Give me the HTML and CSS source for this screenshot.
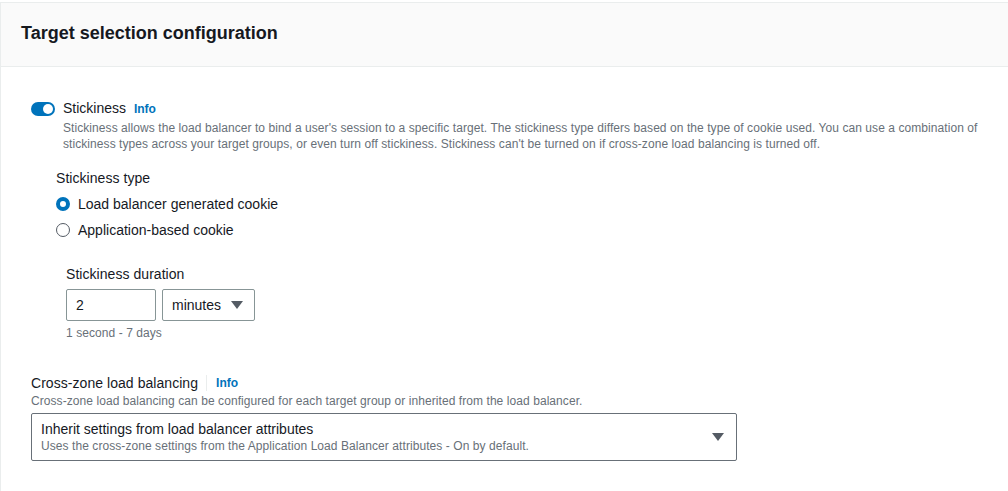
FILE: index.html
```html
<!DOCTYPE html>
<html lang="en">
<head>
    <meta charset="UTF-8">
    <title>Target selection configuration</title>
    <link rel="stylesheet" href="styles.css">
</head>
<body>
    <div class="panel">
        <div class="panel-header">
            <h2>Target selection configuration</h2>
        </div>

        <div class="panel-body">
            <div class="toggle-row">
                <span class="toggle"><span class="knob"></span></span>
                <div class="toggle-text">
                    <div class="label">Stickiness <a class="info">Info</a></div>
                    <p class="desc">Stickiness allows the load balancer to bind a user's session to a specific target. The stickiness type differs based on the type of cookie used. You can use a combination of stickiness types across your target groups, or even turn off stickiness. Stickiness can't be turned on if cross-zone load balancing is turned off.</p>
                </div>
            </div>

            <div class="sticky-type">
                <div class="field-label">Stickiness type</div>
                <label class="radio"><span class="dot checked"></span>Load balancer generated cookie</label>
                <label class="radio"><span class="dot"></span>Application-based cookie</label>

                <div class="duration">
                    <div class="field-label">Stickiness duration</div>
                    <div class="duration-inputs">
                        <div class="input">2</div>
                        <div class="input unit">minutes <span class="caret"></span></div>
                    </div>
                    <div class="hint">1 second - 7 days</div>
                </div>
            </div>

            <div class="cross-zone">
                <div class="field-label">Cross-zone load balancing <span class="sep"></span><a class="info">Info</a></div>
                <div class="hint dark">Cross-zone load balancing can be configured for each target group or inherited from the load balancer.</div>
                <div class="select">
                    <div>
                        <div class="select-title">Inherit settings from load balancer attributes</div>
                        <div class="hint">Uses the cross-zone settings from the Application Load Balancer attributes - On by default.</div>
                    </div>
                    <span class="caret"></span>
                </div>
            </div>
        </div>
    </div>
</body>
</html>
```

FILE: styles.css
```css
:root {
    --text: #16191f;
    --muted: #687078;
    --blue: #0073bb;
    --line: #eaeded;
    --input-border: #879596;
}

* {
    margin: 0;
    padding: 0;
    box-sizing: border-box;
}

body {
    font-family: 'Liberation Sans', Arial, sans-serif;
    color: var(--text);
    background: #fff;
}

.panel {
    margin-top: 2px;
    border-top: 1px solid var(--line);
    border-left: 1px solid var(--line);
}

.panel-header {
    height: 64px;
    background: #fafafa;
    border-bottom: 1px solid var(--line);
    display: flex;
    align-items: center;
    padding: 0 20px;
}

.panel-header h2 {
    font-size: 18px;
    font-weight: 700;
    margin-top: -2px;
}

.panel-body {
    padding: 31px 30px 30px;
}

.info {
    color: var(--blue);
    font-size: 12px;
    font-weight: 700;
    margin-left: 4px;
}

.toggle-row {
    display: flex;
    gap: 8px;
}

.toggle {
    width: 24px;
    height: 14px;
    border-radius: 7px;
    background: var(--blue);
    margin-top: 4px;
    flex-shrink: 0;
    display: flex;
    align-items: center;
    justify-content: flex-end;
    padding-right: 2px;
}

.knob {
    width: 10px;
    height: 10px;
    border-radius: 50%;
    background: #fff;
}

.label {
    font-size: 14px;
    line-height: 20px;
}

.desc {
    font-size: 12px;
    line-height: 16px;
    color: var(--muted);
    margin-top: 1px;
    letter-spacing: 0.07px;
}

.sticky-type {
    padding-left: 25px;
    margin-top: 16px;
}

.field-label {
    font-size: 14px;
    line-height: 20px;
    display: flex;
    align-items: center;
    letter-spacing: 0.05px;
}

.radio {
    display: flex;
    align-items: center;
    gap: 8px;
    font-size: 14px;
    line-height: 20px;
    margin-top: 6px;
}

.dot {
    width: 14px;
    height: 14px;
    border-radius: 50%;
    border: 1px solid #545b64;
    background: #fff;
}

.dot.checked {
    border: 4px solid var(--blue);
}

.duration {
    padding-left: 10px;
    margin-top: 24px;
}

.duration-inputs {
    display: flex;
    gap: 6px;
    margin-top: 5px;
}

.input {
    height: 32px;
    width: 90px;
    border: 1px solid var(--input-border);
    border-radius: 2px;
    font-size: 14px;
    padding: 0 9px;
    display: flex;
    align-items: center;
}

.input.unit {
    width: 93px;
    justify-content: space-between;
    padding-right: 11px;
}

.caret {
    width: 0;
    height: 0;
    border-left: 6px solid transparent;
    border-right: 6px solid transparent;
    border-top: 8px solid #545b64;
}

.hint {
    font-size: 12px;
    line-height: 16px;
    color: var(--muted);
    margin-top: 4px;
    letter-spacing: 0.07px;
}

.cross-zone {
    margin-top: 32px;
}

.sep {
    width: 1px;
    height: 16px;
    background: var(--line);
    margin-left: 8px;
    margin-right: 9px;
}

.cross-zone .info {
    margin-left: 0;
}

.hint.dark {
    margin-top: 0;
}

.select {
    width: 706px;
    height: 48px;
    border: 1px solid #687078;
    border-radius: 2px;
    margin-top: 4px;
    display: flex;
    align-items: center;
    justify-content: space-between;
    padding: 0 12px 0 9px;
}

.select-title {
    font-size: 14px;
    line-height: 18px;
}

.select .hint {
    margin-top: 0;
}
```
